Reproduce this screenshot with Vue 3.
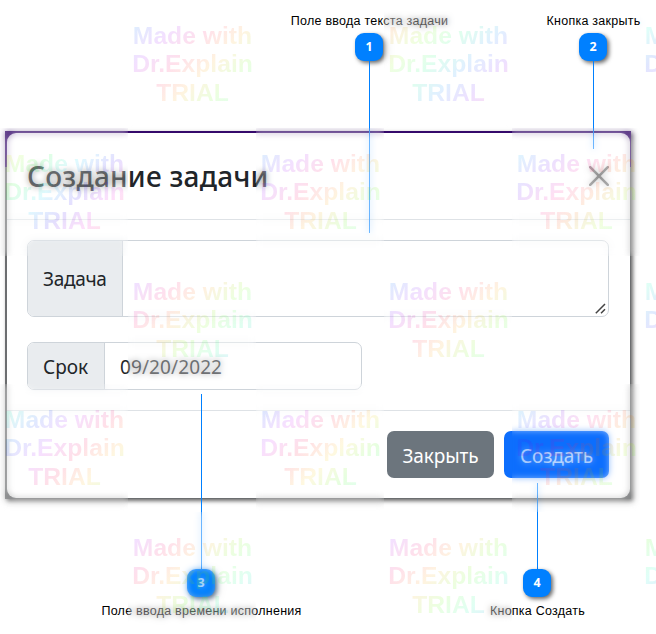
<script setup>
const marks = [
  [128, 0, 240], [384, 0, 50], [640, 0, 190],
  [0, 128, 90], [256, 128, 240], [512, 128, 225],
  [128, 256, 295], [384, 256, 240], [640, 256, 185],
  [0, 384, 185], [256, 384, 250], [512, 384, 225],
  [128, 512, 300], [384, 512, 300], [640, 512, 130],
].map(([x, y, hue]) => ({ x, y, hue: hue - 82 }))

const callouts = [
  { n: 1, label: 'Поле ввода текста задачи', cls: 'top c1' },
  { n: 2, label: 'Кнопка закрыть', cls: 'top c2' },
  { n: 3, label: 'Поле ввода времени исполнения', cls: 'bottom c3' },
  { n: 4, label: 'Кнопка Создать', cls: 'bottom c4' },
]
</script>

<template>
  <div class="page">
    <div class="shot">
      <div class="modal">
        <header class="head">
          <h1>Создание задачи</h1>
          <svg class="close" viewBox="0 0 20 20" width="20" height="20">
            <path d="M1.2 1.2 18.8 18.8M18.8 1.2 1.2 18.8" fill="none" stroke="#747474" stroke-width="2.6" stroke-linecap="round" />
          </svg>
        </header>
        <div class="body">
          <div class="group task">
            <span class="addon"><span class="t-task">Задача</span></span>
            <div class="field">
              <svg class="grip" viewBox="0 0 11 11" width="11" height="11">
                <path d="M.8 10.2 10 1M6 10.2 10 6.2" fill="none" stroke="#444" stroke-width="1.5" />
              </svg>
            </div>
          </div>
          <div class="group due">
            <span class="addon"><span class="t-due">Срок</span></span>
            <div class="field"><span class="t-date">09/20/2022</span></div>
          </div>
        </div>
        <footer class="foot">
          <button class="btn gray"><span>Закрыть</span></button>
          <button class="btn blue"><span>Создать</span></button>
        </footer>
      </div>
    </div>

    <div v-for="c in callouts" :key="c.n" class="callout" :class="c.cls">
      <span class="label">{{ c.label }}</span>
      <span class="badge">{{ c.n }}</span>
      <span class="line"></span>
    </div>

    <template v-for="(m, i) in marks" :key="i">
      <div class="haze" :style="{ left: m.x + 'px', top: m.y + 'px' }"></div>
      <div class="mark" :style="{ left: m.x + 'px', top: m.y + 'px', '--h': m.hue }">
        Made with<br />Dr.Explain<br />TRIAL
      </div>
    </template>
  </div>
</template>

<style>
body { margin: 0; background: #fff; overflow: hidden; }
</style>

<style scoped>
.page {
  position: relative;
  box-sizing: border-box;
  width: 656px;
  height: 634px;
  padding: 131px 0 0 5px;
  overflow: hidden;
  background: #fff;
  font-family: "Noto Sans", "Open Sans", sans-serif;
  color: #212529;
}
.shot {
  box-sizing: border-box;
  width: 626px;
  height: 368px;
  padding: 2px 1px 1px 2px;
  background: linear-gradient(#35096b 0 36px, #6c6e70 36px);
  box-shadow: 2px 2px 4px rgba(0, 0, 0, .6);
}
.modal {
  box-sizing: border-box;
  height: 365px;
  display: flex;
  flex-direction: column;
  background: #fff;
  border-radius: 9px;
}
.head {
  box-sizing: border-box;
  height: 87px;
  padding: 0 21px 0 20px;
  display: flex;
  align-items: center;
  justify-content: space-between;
  border-bottom: 1px solid #dee2e6;
}
h1 { margin: 0; font-size: 28px; font-weight: 500; line-height: 40px; letter-spacing: .25px; white-space: nowrap; }
.body {
  box-sizing: border-box;
  height: 190px;
  padding: 20px 21px 0 20px;
  display: flex;
  flex-direction: column;
  gap: 25px;
}
.group { box-sizing: border-box; display: flex; border: 1px solid #ced4da; border-radius: 7px; overflow: hidden; font-size: 19px; }
.task { height: 77px; }
.due { height: 48px; width: 335px; }
.addon {
  box-sizing: border-box;
  display: flex;
  align-items: center;
  padding-left: 15px;
  background: #e9ecef;
  border-right: 1px solid #ced4da;
  white-space: nowrap;
}
.t-task { letter-spacing: -.3px; }
.t-due { padding-top: 2px; }
.t-date { padding-top: 2px; letter-spacing: .1px; }
.task .addon { width: 95px; }
.due .addon { width: 77px; }
.field { flex: 1; display: flex; align-items: center; padding-left: 15px; }
.task .field { align-items: flex-end; justify-content: flex-end; padding: 0 2px 2px 0; }
.foot {
  flex: 1;
  display: flex;
  justify-content: flex-end;
  gap: 10px;
  padding: 20px 21px 0 0;
  border-top: 1px solid #dee2e6;
}
.btn {
  height: 47px;
  padding: 2px 0 0;
  border: 0;
  border-radius: 7px;
  color: #fff;
  font: 19px "Noto Sans", "Open Sans", sans-serif;
  letter-spacing: -.1px;
  white-space: nowrap;
}
.gray { width: 107px; background: #6c757d; }
.blue { width: 105px; background: #0d6efd; }

.callout {
  position: absolute;
  display: flex;
  flex-direction: column;
  align-items: center;
  width: 220px;
  font-family: "Liberation Sans", Arial, sans-serif;
  color: #000;
}
.top { top: 14px; }
.bottom { bottom: 16px; flex-direction: column-reverse; }
.c1 { left: 259px; }
.c2 { left: 483px; }
.c3 { left: 91px; }
.c4 { left: 427px; }
.label { height: 14px; padding-left: 1px; font-size: 12.5px; line-height: 14px; letter-spacing: .25px; white-space: nowrap; }
.badge {
  width: 28px;
  height: 28px;
  border-radius: 9px;
  background: #0080ff;
  box-shadow: 2px 2px 4px rgba(0, 0, 0, .6);
  color: #fff;
  font: 700 12.5px/28px "Open Sans", "Noto Sans", sans-serif;
  text-align: center;
}
.top .badge { margin-top: 5px; }
.bottom .badge { margin-bottom: 7px; }
.line { width: 1px; margin-left: 1px; background: #0080ff; }
.c1 .line { height: 172px; }
.c2 .line { height: 88px; }
.c3 .line { height: 175px; }
.c4 .line { height: 86px; }

.haze {
  position: absolute;
  width: 128px;
  height: 128px;
  backdrop-filter: blur(3px);
  opacity: .47;
}
.mark {
  position: absolute;
  box-sizing: border-box;
  width: 128px;
  height: 128px;
  padding: 22px 0 0 1px;
  font: 700 24.7px/28.4px "Liberation Sans", Arial, sans-serif;
  text-align: center;
  white-space: nowrap;
  color: transparent;
  background-image: linear-gradient(135deg,
    hsl(var(--h) 100% 50% / .12) 0%,
    hsl(calc(var(--h) + 60) 100% 50% / .12) 14.3%,
    hsl(calc(var(--h) + 120) 100% 50% / .12) 28.6%,
    hsl(calc(var(--h) + 180) 100% 50% / .12) 42.9%,
    hsl(calc(var(--h) + 240) 100% 50% / .12) 57.2%,
    hsl(calc(var(--h) + 300) 100% 50% / .12) 71.5%,
    hsl(calc(var(--h) + 360) 100% 50% / .12) 85.8%,
    hsl(calc(var(--h) + 420) 100% 50% / .12) 100%);
  background-clip: text;
  -webkit-background-clip: text;
}
</style>
